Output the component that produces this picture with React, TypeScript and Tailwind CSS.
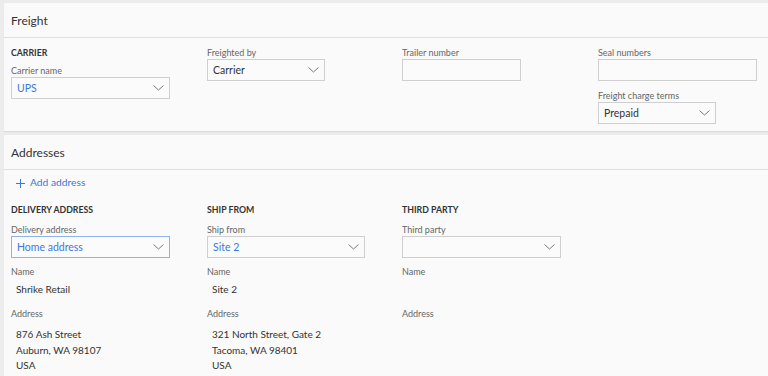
import React from "react";

const font = { fontFamily: 'Lato, "Open Sans", "Liberation Sans", sans-serif' };

function Chevron() {
  return (
    <svg width="11" height="6" viewBox="0 0 11 6" className="shrink-0">
      <path d="M0.5 0.5 L5.5 5 L10.5 0.5" fill="none" stroke="#7a7a7a" strokeWidth="1" />
    </svg>
  );
}

function Select({ value, width, blue, focus }: { value?: string; width: string; blue?: boolean; focus?: boolean }) {
  return (
    <div
      className={`${width} h-[22px] flex items-center justify-between pl-[5px] pr-[5px] bg-[#fbfbfb] border ${
        focus ? "border-[#8fb1ec]" : "border-[#cfcfcf]"
      }`}
    >
      <span className={`text-[10.5px] leading-none ${blue ? "text-[#3a78e0]" : "text-[#333]"}`}>{value}</span>
      <Chevron />
    </div>
  );
}

function TextBox({ width }: { width: string }) {
  return <div className={`${width} h-[22px] bg-[#fbfbfb] border border-[#cfcfcf]`} />;
}

function Label({ children }: { children: React.ReactNode }) {
  return <div className="h-[14px] leading-[16px] text-[9px] text-[#666]">{children}</div>;
}

function Heading({ children }: { children: React.ReactNode }) {
  return <div className="h-[14px] leading-[14px] text-[8.75px] font-bold text-[#333]">{children}</div>;
}

function AddressCol({
  heading,
  label,
  value,
  width,
  blue,
  focus,
  name,
  lines,
}: {
  heading: string;
  label: string;
  value?: string;
  width: string;
  blue?: boolean;
  focus?: boolean;
  name?: string;
  lines: string[];
}) {
  return (
    <div className="flex flex-col">
      <Heading>{heading}</Heading>
      <div className="mt-[5px]">
        <Label>{label}</Label>
      </div>
      <Select value={value} width={width} blue={blue} focus={focus} />
      <div className="mt-[6px]">
        <Label>Name</Label>
      </div>
      <div className="mt-[3px] h-[16px] leading-[16px] pl-[5px] text-[10px] text-[#333]">{name}</div>
      <div className="mt-[9px]">
        <Label>Address</Label>
      </div>
      <div className="mt-[7px] pl-[5px] text-[10px] leading-[15.5px] text-[#333]">
        {lines.map((l) => (
          <div key={l}>{l}</div>
        ))}
      </div>
    </div>
  );
}

export default function App() {
  return (
    <div style={font} className="w-[768px] h-[376px] overflow-hidden bg-[#ececec] pt-[3px] pl-[4px]">
      {/* Freight card */}
      <div className="bg-[#fafafa] h-[128px] flex flex-col shadow-[0_1px_1px_rgba(0,0,0,0.08)]">
        <div className="h-[35px] flex items-center px-[7px] pt-[1px] border-b border-[#e0e0e0]">
          <span className="text-[12px] text-[#333]">Freight</span>
        </div>
        <div className="grid grid-cols-[196px_195px_196px_1fr] px-[7px] pt-[6px]">
          <div className="flex flex-col pt-[2px]">
            <Heading>CARRIER</Heading>
            <div className="mt-[3px]">
              <Label>Carrier name</Label>
            </div>
            <Select value="UPS" width="w-[159px]" blue />
          </div>
          <div className="flex flex-col pt-[1px]">
            <Label>Freighted by</Label>
            <Select value="Carrier" width="w-[118px]" />
          </div>
          <div className="flex flex-col pt-[1px]">
            <Label>Trailer number</Label>
            <TextBox width="w-[119px]" />
          </div>
          <div className="flex flex-col pt-[1px]">
            <Label>Seal numbers</Label>
            <TextBox width="w-[159px]" />
            <div className="mt-[7px]">
              <Label>Freight charge terms</Label>
            </div>
            <Select value="Prepaid" width="w-[118px]" />
          </div>
        </div>
      </div>

      {/* Addresses card */}
      <div className="mt-[4px] bg-[#fafafa] h-[300px] flex flex-col">
        <div className="h-[35px] flex items-center px-[7px] pt-[2px] border-b border-[#e0e0e0]">
          <span className="text-[12px] text-[#333]">Addresses</span>
        </div>
        <div className="h-[26px] flex items-center pl-[12px] gap-[5px]">
          <svg width="9" height="9" viewBox="0 0 9 9">
            <path d="M4.5 0 V9 M0 4.5 H9" stroke="#3a78e0" strokeWidth="1" fill="none" />
          </svg>
          <span className="text-[10.25px] text-[#3a78e0]">Add address</span>
        </div>
        <div className="grid grid-cols-[196px_195px_196px_1fr] px-[7px] pt-[7px]">
          <AddressCol
            heading="DELIVERY ADDRESS"
            label="Delivery address"
            value="Home address"
            width="w-[159px]"
            blue
            focus
            name="Shrike Retail"
            lines={["876 Ash Street", "Auburn, WA 98107", "USA"]}
          />
          <AddressCol
            heading="SHIP FROM"
            label="Ship from"
            value="Site 2"
            width="w-[158px]"
            blue
            name="Site 2"
            lines={["321 North Street, Gate 2", "Tacoma, WA 98401", "USA"]}
          />
          <AddressCol heading="THIRD PARTY" label="Third party" width="w-[159px]" lines={[]} />
        </div>
      </div>
    </div>
  );
}
